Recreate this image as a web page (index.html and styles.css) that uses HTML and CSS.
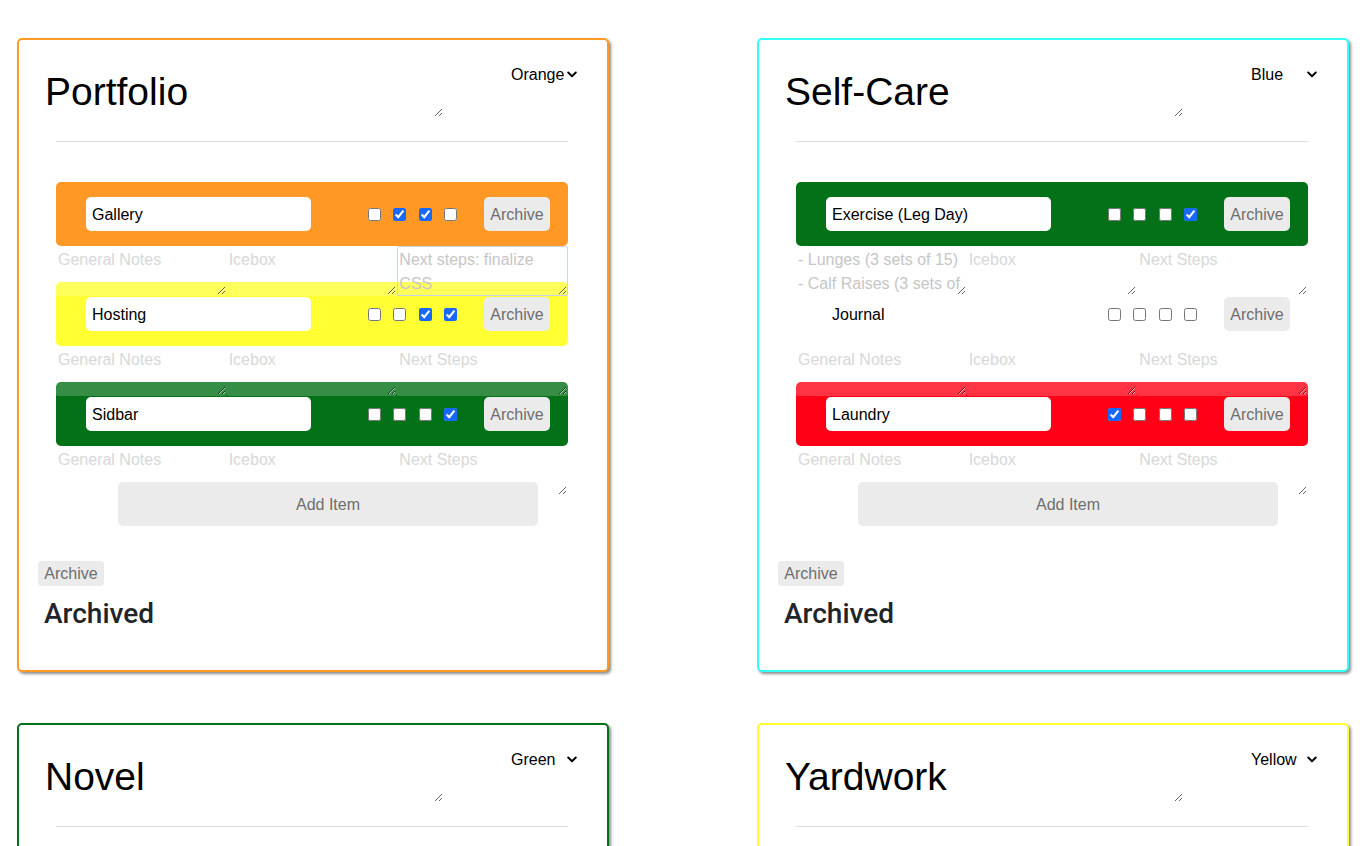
FILE: index.html
```html
<!DOCTYPE html>
<html lang="en">
<head>
<meta charset="utf-8">
<title>Boards</title>
<link rel="stylesheet" href="styles.css">
</head>
<body>
<main class="board">

  <section class="card border-orange">
    <div class="card-head">
      <textarea class="title">Portfolio</textarea>
      <div class="select-wrap">
        <select class="color-select"><option>Orange</option><option>Blue</option><option>Green</option><option>Yellow</option><option>Red</option></select>
        <svg class="chevron" width="10" height="7" viewBox="0 0 10 7"><path d="M1.2 1.5 L5 5.2 L8.8 1.5" fill="none" stroke="#000" stroke-width="1.9" stroke-linecap="round" stroke-linejoin="round"/></svg>
      </div>
    </div>
    <hr class="divider">
    <div class="items">
      <div class="item">
        <div class="bar bg-orange">
          <input class="name" value="Gallery">
          <div class="checks"><input type="checkbox"><input type="checkbox" checked><input type="checkbox" checked><input type="checkbox"></div>
          <button class="btn">Archive</button>
        </div>
        <div class="notes">
          <textarea placeholder="General Notes"></textarea>
          <textarea placeholder="Icebox"></textarea>
          <textarea class="focused" placeholder="Next Steps">Next steps: finalize CSS</textarea>
        </div>
      </div>
      <div class="item">
        <div class="bar bg-yellow">
          <input class="name" value="Hosting">
          <div class="checks"><input type="checkbox"><input type="checkbox"><input type="checkbox" checked><input type="checkbox" checked></div>
          <button class="btn">Archive</button>
        </div>
        <div class="notes">
          <textarea placeholder="General Notes"></textarea>
          <textarea placeholder="Icebox"></textarea>
          <textarea placeholder="Next Steps"></textarea>
        </div>
      </div>
      <div class="item">
        <div class="bar bg-green">
          <input class="name" value="Sidbar">
          <div class="checks"><input type="checkbox"><input type="checkbox"><input type="checkbox"><input type="checkbox" checked></div>
          <button class="btn">Archive</button>
        </div>
        <div class="notes">
          <textarea placeholder="General Notes"></textarea>
          <textarea placeholder="Icebox"></textarea>
          <textarea placeholder="Next Steps"></textarea>
        </div>
      </div>
      <div class="add-row"><button class="add">Add Item</button></div>
    </div>
    <div class="archive-area">
      <div class="small-row"><button class="btn small">Archive</button></div>
      <h2 class="archived">Archived</h2>
    </div>
  </section>

  <section class="card border-cyan">
    <div class="card-head">
      <textarea class="title">Self-Care</textarea>
      <div class="select-wrap">
        <select class="color-select"><option>Blue</option><option>Orange</option><option>Green</option><option>Yellow</option><option>Red</option></select>
        <svg class="chevron" width="10" height="7" viewBox="0 0 10 7"><path d="M1.2 1.5 L5 5.2 L8.8 1.5" fill="none" stroke="#000" stroke-width="1.9" stroke-linecap="round" stroke-linejoin="round"/></svg>
      </div>
    </div>
    <hr class="divider">
    <div class="items">
      <div class="item">
        <div class="bar bg-green">
          <input class="name" value="Exercise (Leg Day)">
          <div class="checks"><input type="checkbox"><input type="checkbox"><input type="checkbox"><input type="checkbox" checked></div>
          <button class="btn">Archive</button>
        </div>
        <div class="notes">
          <textarea placeholder="General Notes">- Lunges (3 sets of 15)
- Calf Raises (3 sets of 15)</textarea>
          <textarea placeholder="Icebox"></textarea>
          <textarea placeholder="Next Steps"></textarea>
        </div>
      </div>
      <div class="item">
        <div class="bar">
          <input class="name" value="Journal">
          <div class="checks"><input type="checkbox"><input type="checkbox"><input type="checkbox"><input type="checkbox"></div>
          <button class="btn">Archive</button>
        </div>
        <div class="notes">
          <textarea placeholder="General Notes"></textarea>
          <textarea placeholder="Icebox"></textarea>
          <textarea placeholder="Next Steps"></textarea>
        </div>
      </div>
      <div class="item">
        <div class="bar bg-red">
          <input class="name" value="Laundry">
          <div class="checks"><input type="checkbox" checked><input type="checkbox"><input type="checkbox"><input type="checkbox"></div>
          <button class="btn">Archive</button>
        </div>
        <div class="notes">
          <textarea placeholder="General Notes"></textarea>
          <textarea placeholder="Icebox"></textarea>
          <textarea placeholder="Next Steps"></textarea>
        </div>
      </div>
      <div class="add-row"><button class="add">Add Item</button></div>
    </div>
    <div class="archive-area">
      <div class="small-row"><button class="btn small">Archive</button></div>
      <h2 class="archived">Archived</h2>
    </div>
  </section>

  <section class="card border-green">
    <div class="card-head">
      <textarea class="title">Novel</textarea>
      <div class="select-wrap">
        <select class="color-select"><option>Green</option><option>Orange</option><option>Blue</option><option>Yellow</option><option>Red</option></select>
        <svg class="chevron" width="10" height="7" viewBox="0 0 10 7"><path d="M1.2 1.5 L5 5.2 L8.8 1.5" fill="none" stroke="#000" stroke-width="1.9" stroke-linecap="round" stroke-linejoin="round"/></svg>
      </div>
    </div>
    <hr class="divider">
    <div class="items lower">
      <div class="add-row"><button class="add">Add Item</button></div>
    </div>
    <div class="archive-area">
      <div class="small-row"><button class="btn small">Archive</button></div>
      <h2 class="archived">Archived</h2>
    </div>
  </section>

  <section class="card border-yellow">
    <div class="card-head">
      <textarea class="title">Yardwork</textarea>
      <div class="select-wrap">
        <select class="color-select"><option>Yellow</option><option>Orange</option><option>Blue</option><option>Green</option><option>Red</option></select>
        <svg class="chevron" width="10" height="7" viewBox="0 0 10 7"><path d="M1.2 1.5 L5 5.2 L8.8 1.5" fill="none" stroke="#000" stroke-width="1.9" stroke-linecap="round" stroke-linejoin="round"/></svg>
      </div>
    </div>
    <hr class="divider">
    <div class="items lower">
      <div class="add-row"><button class="add">Add Item</button></div>
    </div>
    <div class="archive-area">
      <div class="small-row"><button class="btn small">Archive</button></div>
      <h2 class="archived">Archived</h2>
    </div>
  </section>

</main>
</body>
</html>
```

FILE: styles.css
```css
* {
  box-sizing: border-box;
}

html, body {
  margin: 0;
  background: #ffffff;
  font-family: "Liberation Sans", Arial, sans-serif;
  color: #000;
}

.board {
  display: grid;
  grid-template-columns: 592px 592px;
  column-gap: 148px;
  row-gap: 51px;
  padding: 38px 0 40px 17px;
}

.card {
  border: 2px solid #ccc;
  border-radius: 5px;
  box-shadow: 2px 2px 3px rgba(0, 0, 0, 0.45);
  background: #fff;
  min-height: 634px;
  padding-bottom: 39px;
}

.border-orange { border-color: #ff9a27; }
.border-cyan { border-color: #33ffff; }
.border-green { border-color: #037118; }
.border-yellow { border-color: #ffff33; }

.card-head {
  display: flex;
  justify-content: space-between;
  align-items: flex-start;
  padding: 24px 24px 0 24px;
}

.title {
  width: 400px;
  height: 50px;
  margin: 3px 0 0 0;
  padding: 2px;
  border: none;
  background: transparent;
  font-family: "Liberation Sans", Arial, sans-serif;
  font-size: 39px;
  line-height: 46px;
  color: #000;
  overflow: hidden;
  outline: none;
}

.select-wrap {
  display: inline-flex;
  align-items: center;
  height: 20px;
}

.color-select {
  appearance: none;
  -webkit-appearance: none;
  width: 77px;
  height: 20px;
  padding: 0;
  border: none;
  background: transparent;
  font-family: "Liberation Sans", Arial, sans-serif;
  font-size: 16px;
  color: #000;
  outline: none;
}

.chevron {
  margin-left: -21px;
  margin-right: 6px;
  margin-top: 1px;
  pointer-events: none;
}

.divider {
  margin: 24px 39px 0 37px;
  border: none;
  border-top: 1px solid #dedede;
  height: 0;
}

.items {
  margin: 40px 39px 0 37px;
}

.bar {
  display: flex;
  align-items: center;
  height: 64px;
  padding: 0 18px 0 30px;
  border-radius: 5px;
}

.bg-orange { background: #ff9824; }
.bg-yellow { background: #ffff33; }
.bg-green { background: #037118; }
.bg-red { background: #ff0016; }

.name {
  width: 225px;
  height: 34px;
  padding: 2px 6px 0 6px;
  border: none;
  border-radius: 5px;
  background: #fff;
  font-family: "Liberation Sans", Arial, sans-serif;
  font-size: 16px;
  color: #000;
  outline: none;
}

.checks {
  display: flex;
  gap: 12.5px;
  margin-left: auto;
  margin-right: 27px;
}

.checks input {
  width: 13px;
  height: 13px;
  margin: 0;
  accent-color: #1668ff;
}

.btn {
  width: 66px;
  height: 34px;
  padding: 2px 0 0 0;
  border: none;
  border-radius: 5px;
  background: #ebebeb;
  color: #6e6e6e;
  font-family: "Liberation Sans", Arial, sans-serif;
  font-size: 16px;
}

.notes {
  display: flex;
  height: 50px;
  margin-bottom: -14px;
}

.notes textarea {
  flex: 1 1 0;
  width: 0;
  height: 50px;
  margin: 0;
  padding: 1px;
  border: 1px solid transparent;
  border-radius: 2px;
  background: rgba(255, 255, 255, 0.2);
  font-family: "Liberation Sans", Arial, sans-serif;
  font-size: 16px;
  line-height: 24px;
  color: #c6c6c6;
  overflow: hidden;
  outline: none;
}

.notes textarea::placeholder {
  color: #d8d8d8;
  opacity: 1;
}

.notes textarea.focused {
  border-color: #c6d5ee;
}

.add-row {
  display: flex;
  padding-left: 62px;
}

.add {
  width: 420px;
  height: 44px;
  margin: 0;
  padding: 2px 0 0 0;
  border: none;
  border-radius: 5px;
  background: #ebebeb;
  color: #6e6e6e;
  font-family: "Liberation Sans", Arial, sans-serif;
  font-size: 16px;
}

.archive-area {
  padding: 35px 0 0 19px;
}

.small-row {
  display: flex;
}

.btn.small {
  width: 66px;
  height: 25px;
  padding: 1px 0 0 0;
  border-radius: 4px;
}

.archived {
  margin: 11px 0 0 6px;
  font-family: Roboto, "Liberation Sans", sans-serif;
  font-weight: 500;
  font-size: 28px;
  line-height: 34px;
  color: #212529;
}
```
